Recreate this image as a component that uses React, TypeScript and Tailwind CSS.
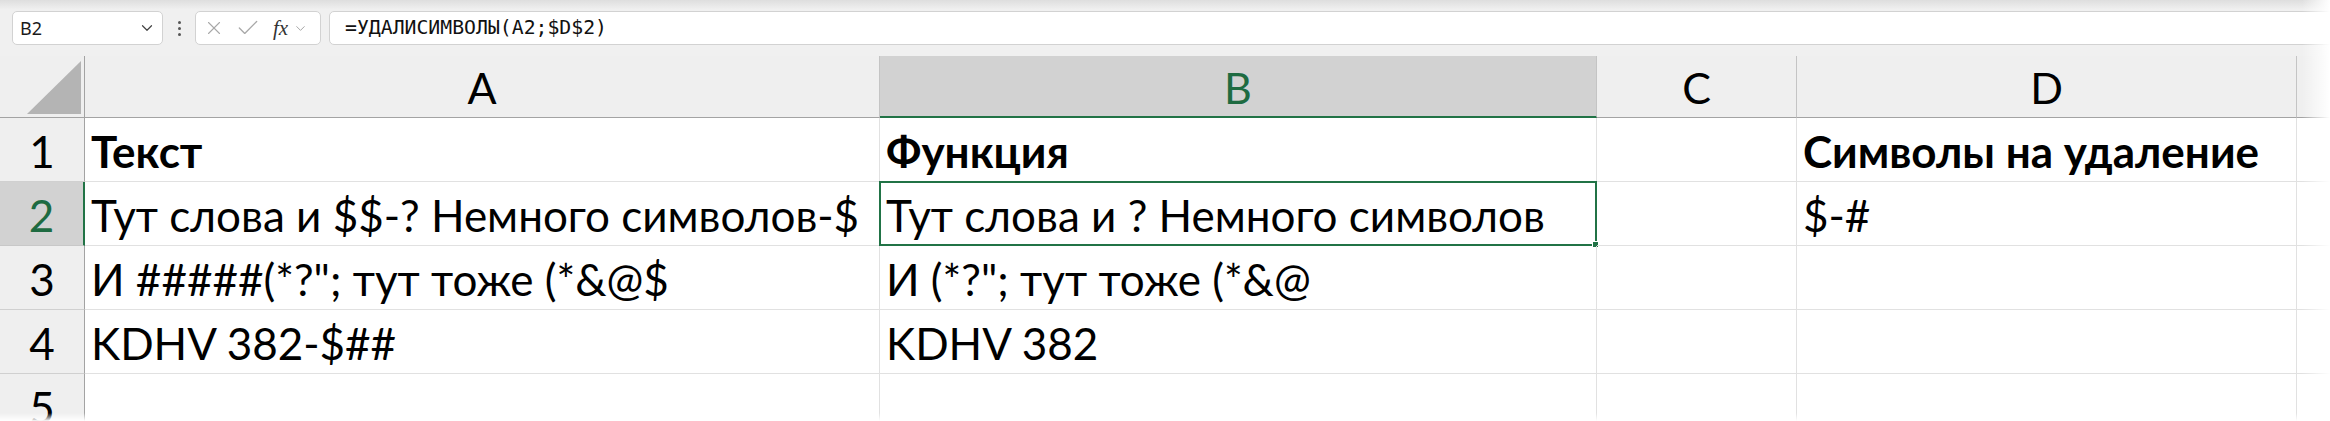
import { Check, ChevronDown, X } from "lucide-react";
import type React from "react";

const rows: string[][] = [
	["Текст", "Функция", "", "Символы на удаление"],
	["Тут слова и $$-? Немного символов-$", "Тут слова и ? Немного символов", "", "$-#"],
	['И #####(*?"; тут тоже (*&@$', 'И (*?"; тут тоже (*&@', "", ""],
	["KDHV 382-$##", "KDHV 382", "", ""],
	["", "", "", ""],
];

const FormulaBar: React.FC = () => {
	return (
		<div className="relative h-[56px] bg-[#f0f0f0]">
			<div className="absolute left-0 top-0 h-[10px] w-full bg-linear-to-b from-[#dedede] to-[#f1f1f1]" />
			<div className="relative flex items-start pt-[11px]">
				<div className="ml-[12px] flex h-[34px] w-[151px] items-center justify-between rounded-[5px] border border-[#d2d2d2] bg-white pl-[7px] pr-[6px]">
					<span className="font-['Noto_Sans',sans-serif] text-[18px] leading-none text-[#1a1a1a]">B2</span>
					<ChevronDown size={18} strokeWidth={1.6} className="text-[#444]" />
				</div>
				<div className="flex h-[34px] w-[32px] flex-col items-center justify-center gap-[3px]">
					<span className="h-[3px] w-[3px] rounded-full bg-[#555]" />
					<span className="h-[3px] w-[3px] rounded-full bg-[#555]" />
					<span className="h-[3px] w-[3px] rounded-full bg-[#555]" />
				</div>
				<div className="flex h-[34px] w-[126px] items-center rounded-[5px] border border-[#d2d2d2] bg-white pl-[7px]">
					<X size={22} strokeWidth={1.2} className="text-[#a8a8a8]" />
					<Check size={26} strokeWidth={1.2} className="ml-[10px] text-[#a8a8a8]" />
					<span className="ml-[12px] font-['Liberation_Serif',serif] text-[21px] italic leading-none text-[#333]">fx</span>
					<ChevronDown size={15} strokeWidth={1.4} className="ml-[5px] text-[#999]" />
				</div>
				<div className="-mr-[20px] ml-[8px] flex h-[34px] flex-1 items-center rounded-l-[5px] border border-[#d2d2d2] bg-white pl-[15px]">
					<span className="font-['DejaVu_Sans_Mono',monospace] text-[19.8px] leading-none text-[#111]">=УДАЛИСИМВОЛЫ(A2;$D$2)</span>
				</div>
			</div>
		</div>
	);
};

const Sheet: React.FC = () => {
	return (
		<div className="grid grid-cols-[85px_795px_717px_200px_500px_33px] font-['Lato','Noto_Sans',sans-serif] text-black">
			{/* column headers */}
			<div className="flex h-[62px] items-end justify-end border-b border-r border-[#a3a3a3] bg-[#efefef] pb-[3px] pr-[3px]">
				<svg width="54" height="53" viewBox="0 0 54 53">
					<polygon points="54,0 54,53 0,53" fill="#b4b4b4" />
				</svg>
			</div>
			{["A", "B", "C", "D"].map((c) => (
				<div
					key={c}
					className={
						c === "B"
							? "flex h-[62px] items-end justify-center border-b-2 border-r border-b-[#217346] border-r-[#c4c4c4] bg-[#d2d2d2] pb-[7px] text-[43px] leading-none text-[#1e6b41]"
							: "flex h-[62px] items-end justify-center border-b border-r border-b-[#a3a3a3] border-r-[#c4c4c4] bg-[#efefef] pb-[8px] text-[43px] leading-none"
					}
				>
					{c}
				</div>
			))}
			<div className="h-[62px] border-b border-[#a3a3a3] bg-[#efefef]" />

			{rows.map((r, i) => (
				<Row key={i} n={i + 1} cells={r} />
			))}
		</div>
	);
};

const Row: React.FC<{ n: number; cells: string[] }> = ({ n, cells }) => {
	const selected = n === 2;
	return (
		<>
			<div
				className={
					selected
						? "flex h-[64px] items-end justify-center border-b border-r-2 border-b-[#c8c8c8] border-r-[#217346] bg-[#d2d2d2] pb-[8px] text-[44px] leading-none text-[#1e6b41]"
						: "flex h-[64px] items-end justify-center border-b border-r border-b-[#d0d0d0] border-r-[#a3a3a3] bg-[#efefef] pb-[8px] text-[44px] leading-none"
				}
			>
				{n}
			</div>
			{cells.map((t, j) => (
				<div
					key={j}
					className={`relative flex h-[64px] items-end whitespace-nowrap border-b border-r border-[#e1e1e1] pb-[8px] pl-[6px] text-[44px] leading-none ${
						n === 1 ? "font-bold" : ""
					}`}
				>
					<span>{t}</span>
					{selected && j === 1 && (
						<>
							<div className="pointer-events-none absolute -left-px -top-px bottom-[-1px] right-[-1px] border-2 border-[#217346]" />
							<div className="absolute bottom-[-3px] right-[-3px] h-[7px] w-[7px] border border-white bg-[#217346]" />
						</>
					)}
				</div>
			))}
			<div className="h-[64px] border-b border-[#e1e1e1]" />
		</>
	);
};

export default function App() {
	return (
		<div className="relative h-[421px] w-[2330px] overflow-hidden bg-white">
			<FormulaBar />
			<Sheet />
			<div className="pointer-events-none absolute right-0 top-0 h-full w-[28px] bg-linear-to-r from-transparent to-white" />
			<div className="pointer-events-none absolute bottom-0 left-0 h-[8px] w-full bg-linear-to-b from-transparent to-white" />
		</div>
	);
}
